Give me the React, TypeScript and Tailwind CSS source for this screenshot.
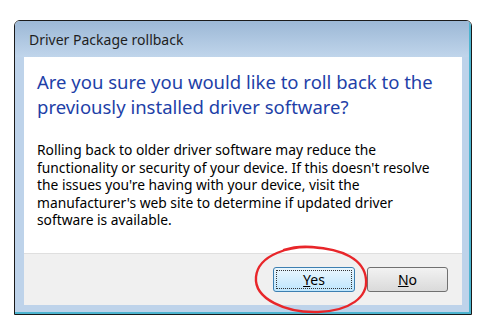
import React from 'react';

// Win7-style confirmation dialog with a hand-drawn red circle around "Yes"
const font = { fontFamily: '"Noto Sans", "Open Sans", Arial, sans-serif' };

const App = () => {
  return (
    <div className="relative w-[503px] h-[331px] bg-white pt-[20px] pl-[14px]" style={font}>
      <div className="w-[458px] h-[295px] border border-[#1a1a1a] rounded-t-[6px] overflow-hidden">
        <div className="h-full flex flex-col border-r-2 border-b-2 border-r-[#4cb4cf] border-b-[#4cb4cf] bg-[#bed3ea]">
          {/* title bar */}
          <div className="h-[36px] shrink-0 flex items-center pl-[14px] bg-gradient-to-b from-[#9cb8d6] to-[#c0d5eb] text-[14px] text-[#1e1e1e]">
            Driver Package rollback
          </div>
          {/* client area */}
          <div className="flex-1 ml-[9px] mr-[7px] mb-[7px] flex flex-col">
            <div className="flex-1 bg-white pl-[13px] pt-[12px]">
              <div className="text-[18.5px] leading-[25px] text-[#1e3fa8]">
                <div>Are you sure you would like to roll back to the</div>
                <div>previously installed driver software?</div>
              </div>
              <div className="mt-[22px] text-[13.8px] leading-[17.5px] text-black">
                <div>Rolling back to older driver software may reduce the</div>
                <div>functionality or security of your device. If this doesn't resolve</div>
                <div>the issues you're having with your device, visit the</div>
                <div>manufacturer's web site to determine if updated driver</div>
                <div>software is available.</div>
              </div>
            </div>
            <div className="h-[52px] shrink-0 border-t border-[#dfdfdf] bg-[#f0f0f0] flex items-center justify-end gap-[12px] pr-[14px]">
              <button className="w-[82px] h-[25px] rounded-[3px] border border-[#3c7fb1] bg-gradient-to-b from-[#eaf6fd] to-[#bee6fd] p-[2px] text-[14px] text-black">
                <span className="flex h-full w-full items-center justify-center border border-dotted border-[#333]">
                  <span><span className="underline">Y</span>es</span>
                </span>
              </button>
              <button className="w-[81px] h-[25px] rounded-[3px] border border-[#707070] bg-gradient-to-b from-[#f2f2f2] to-[#dadada] text-[14px] text-black">
                <span className="underline">N</span>o
              </button>
            </div>
          </div>
        </div>
      </div>
      {/* red annotation circle */}
      <svg className="absolute left-[250px] top-[241px]" width="124" height="76" viewBox="0 0 124 76">
        <path
          d="M70 7 C 40 3, 8 14, 6 36 C 4 58, 36 72, 68 71 C 100 70, 118 56, 116 38 C 114 18, 92 8, 62 6 C 50 5, 40 7, 34 9"
          fill="none"
          stroke="#e8262a"
          strokeWidth="2.4"
          strokeLinecap="round"
        />
      </svg>
    </div>
  );
};

export default App;
